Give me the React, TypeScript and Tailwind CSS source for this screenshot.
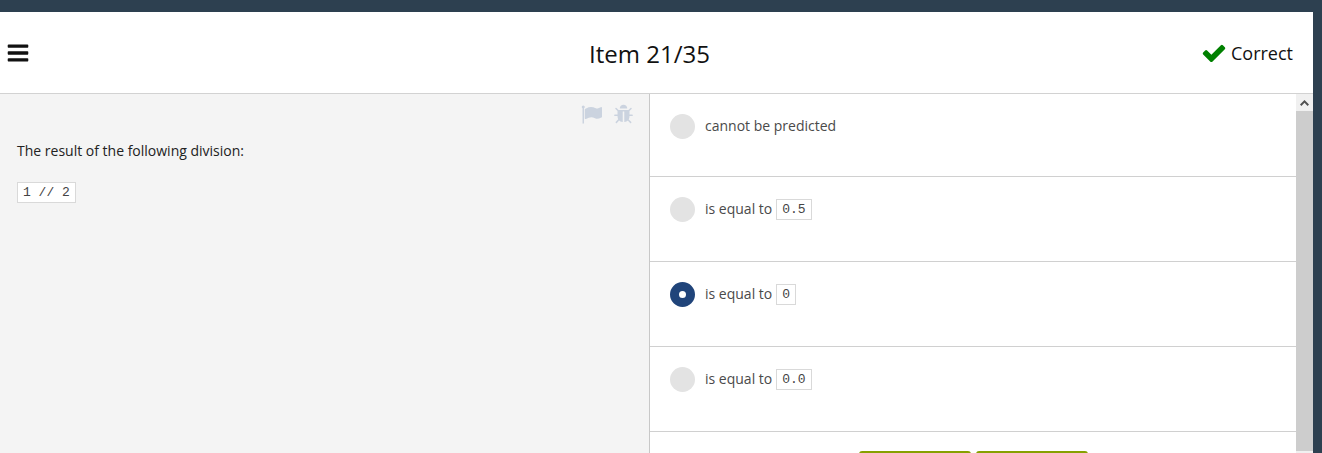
import { useState } from "react";

type IconProps = { path: string; className: string };

function Icon({ path, className }: IconProps) {
  return (
    <svg viewBox="0 0 1792 1792" fill="currentColor" className={className} aria-hidden="true">
      <path d={path} />
    </svg>
  );
}

const BARS =
  "M1664 1344v128q0 26-19 45t-45 19h-1408q-26 0-45-19t-19-45v-128q0-26 19-45t45-19h1408q26 0 45 19t19 45zm0-512v128q0 26-19 45t-45 19h-1408q-26 0-45-19t-19-45v-128q0-26 19-45t45-19h1408q26 0 45 19t19 45zm0-512v128q0 26-19 45t-45 19h-1408q-26 0-45-19t-19-45v-128q0-26 19-45t45-19h1408q26 0 45 19t19 45z";
const CHECK =
  "M1671 566q0 40-28 68l-724 724-136 136q-28 28-68 28t-68-28l-136-136-362-362q-28-28-28-68t28-68l136-136q28-28 68-28t68 28l294 295 656-657q28-28 68-28t68 28l136 136q28 28 28 68z";
const FLAG =
  "M320 256q0 72-64 110v1266q0 13-9.5 22.5t-22.5 9.5h-64q-13 0-22.5-9.5t-9.5-22.5v-1266q-64-38-64-110 0-53 37.5-90.5t90.5-37.5 90.5 37.5 37.5 90.5zm1472 64v763q0 25-12.5 38.5t-39.5 27.5q-215 116-369 116-61 0-123.5-22t-108.5-48-115.5-48-142.5-22q-192 0-464 146-17 9-33 9-26 0-45-19t-19-45v-742q0-32 31-55 21-14 79-43 236-120 421-120 107 0 200 29t219 88q38 19 88 19 54 0 117.5-21t110-47 88-47 54.5-21q26 0 45 19t19 45z";
const BUG =
  "M1696 960q0 26-19 45t-45 19h-224q0 171-67 290l208 209q19 19 19 45t-19 45q-18 19-45 19t-45-19l-198-197q-5 5-15 13t-42 28.5-65 36.5-82 29-97 13v-896h-128v896q-51 0-101.5-13.5t-87-33-66-39-43.5-32.5l-15-14-183 207q-20 21-48 21-24 0-43-16-19-18-20.5-44.5t15.5-46.5l202-227q-58-114-58-274h-224q-26 0-45-19t-19-45 19-45 45-19h224v-294l-173-173q-19-19-19-45t19-45 45-19 45 19l173 173h844l173-173q19-19 45-19t45 19 19 45-19 45l-173 173v294h224q26 0 45 19t19 45zm-480-576h-640q0-133 93.5-226.5t226.5-93.5 226.5 93.5 93.5 226.5z";

function Code({ children }: { children: string }) {
  return (
    <code className="inline-block whitespace-pre border border-[#d9d9d9] bg-white px-[5px] font-['Liberation_Mono',monospace] text-[13px] leading-[19px] text-[#444]">
      {children}
    </code>
  );
}

const OPTIONS = [
  { id: "unpredictable", text: "cannot be predicted" },
  { id: "half", text: "is equal to", code: "0.5" },
  { id: "zero", text: "is equal to", code: "0" },
  { id: "zero-float", text: "is equal to", code: "0.0" },
];

export default function App() {
  const [selected, setSelected] = useState("zero");

  return (
    <div className="h-screen overflow-hidden bg-[#2d4050] pt-3 pr-[9px] font-['Open_Sans',sans-serif] text-sm">
      <div className="flex h-full flex-col bg-white">
        <header className="grid h-[82px] shrink-0 grid-cols-[1fr_auto_1fr] items-center border-b border-[#d2d2d2] pr-5 pl-1.5 text-[#111]">
          <button type="button" aria-label="Menu" className="justify-self-start">
            <Icon path={BARS} className="size-6" />
          </button>
          <h1 className="pt-0.5 text-2xl">Item 21/35</h1>
          <p className="flex items-center gap-1 justify-self-end text-lg">
            <Icon path={CHECK} className="size-[26px] text-[#008000]" />
            Correct
          </p>
        </header>

        <main className="grid min-h-0 flex-1 grid-cols-[650fr_646fr_17px]">
          <section className="border-r border-[#c8c8c8] bg-[#f4f4f4] pt-2.5 text-[#222]">
            <div className="flex justify-end gap-[11px] pr-[15px] text-[#cbd3df]">
              <button type="button" aria-label="Flag this item">
                <Icon path={FLAG} className="size-[21px]" />
              </button>
              <button type="button" aria-label="Report a problem">
                <Icon path={BUG} className="size-[21px]" />
              </button>
            </div>
            <div className="flex flex-col items-start gap-[21px] px-[17px] pt-[15px]">
              <p className="leading-[21px]">The result of the following division:</p>
              <Code>1 // 2</Code>
            </div>
          </section>

          <section className="min-h-0 overflow-hidden text-[#4a4a4a]">
            <fieldset>
              {OPTIONS.map((option) => (
                <label
                  key={option.id}
                  className="flex h-[85px] items-start gap-2.5 border-b border-[#d0d0d0] px-5 pt-5 first:h-[83px]"
                >
                  <input
                    type="radio"
                    name="answer"
                    checked={selected === option.id}
                    onChange={() => setSelected(option.id)}
                    className="size-[25px] shrink-0 appearance-none rounded-full bg-[#e3e3e3] checked:border-[9px] checked:border-[#20447a] checked:bg-white"
                  />
                  <span className="flex items-center gap-1 leading-6">
                    {option.text}
                    {option.code && <Code>{option.code}</Code>}
                  </span>
                </label>
              ))}
            </fieldset>
            <div className="flex justify-center gap-[5px] pt-[19px]">
              <button type="button" aria-label="Previous" className="h-9 w-28 rounded-[3px] bg-[#87a000]" />
              <button type="button" aria-label="Next" className="h-9 w-28 rounded-[3px] bg-[#87a000]" />
            </div>
          </section>

          <div className="flex flex-col bg-[#f0f0f0] pb-0.5">
            <button type="button" aria-label="Scroll up" className="flex h-[17px] items-center justify-center text-[#505050]">
              <svg viewBox="0 0 9 6" className="h-1.5 w-[9px]" fill="none" stroke="currentColor" strokeWidth="2">
                <path d="M0.7 5.2 4.5 1.4 8.3 5.2" />
              </svg>
            </button>
            <div className="flex-1 bg-[#cdcdcd]" />
          </div>
        </main>
      </div>
    </div>
  );
}
